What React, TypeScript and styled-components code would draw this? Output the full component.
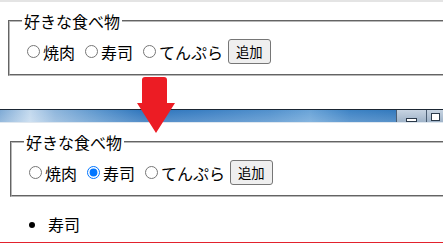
import styled, { createGlobalStyle } from "styled-components";

const GlobalStyle = createGlobalStyle`
  html, body {
    margin: 0;
    padding: 0;
    background: #fff;
  }
  body {
    font-family: "Noto Sans CJK JP", "Noto Sans", sans-serif;
    font-size: 16px;
    color: #000;
  }
`;

const Page = styled.div`
  position: relative;
  width: 443px;
  height: 243px;
  overflow: hidden;
  background: #fff;
`;

const TopEdge = styled.div`
  height: 2px;
  background: #e4e4e4;
`;

const Shot = styled.div<{ $left: number; $height: number }>`
  height: ${(p) => p.$height}px;
  padding: 8px 0 0 ${(p) => p.$left}px;
  box-sizing: border-box;
  overflow: hidden;
`;

const Fieldset = styled.fieldset`
  width: 480px;
  margin: 0;
  padding: 7px 12px 10px 12px;
  border: 2px groove #b8b8b8;
  box-sizing: border-box;
`;

const Legend = styled.legend`
  padding: 0 2px;
  font-size: 16px;
  line-height: 22px;
`;

const Row = styled.div`
  display: flex;
  align-items: center;
  height: 25px;
`;

const Choice = styled.label`
  display: inline-flex;
  align-items: center;
  margin-right: 5px;
  line-height: 22px;
`;

const Radio = styled.input`
  width: 13px;
  height: 13px;
  margin: 0 3px 0 5px;
`;

const AddButton = styled.button`
  height: 25px;
  padding: 0 7px;
  font-family: "Noto Sans CJK JP", sans-serif;
  font-size: 13.33px;
  color: #000;
  background: #efefef;
  border: 1px solid #767676;
  border-radius: 3px;
`;

const TitleBar = styled.div`
  display: flex;
  height: 12px;
  border-top: 1px solid #1b2633;
  border-bottom: 1px solid #dfe7ef;
  background:
    linear-gradient(to bottom, rgba(255, 255, 255, 0) 0%, rgba(255, 255, 255, 0.18) 100%),
    linear-gradient(
      to right,
      #7eaad5 0px,
      #c3d9ee 30px,
      #8fb6dc 55px,
      #5a95cd 100px,
      #2d74bc 145px,
      #3b7fc3 200px,
      #5291cd 270px,
      #6aa4d8 310px,
      #3e83c5 350px,
      #3379bd 398px
    );
`;

const BarSpacer = styled.div`
  flex: 1;
`;

const WinButton = styled.div<{ $width: number }>`
  position: relative;
  width: ${(p) => p.$width}px;
  border-left: 1px solid #4a5d72;
  background: linear-gradient(to bottom, #c7d4e2, #9fb3c8);
  display: flex;
  align-items: flex-end;
  justify-content: center;
`;

const MinGlyph = styled.div`
  width: 9px;
  height: 2px;
  margin-bottom: 0;
  background: #fff;
  border: 1px solid #2b3a4a;
`;

const RestoreGlyph = styled.div`
  width: 7px;
  height: 6px;
  margin: 0 0 1px 0;
  background: #fff;
  border: 1px solid #2b3a4a;
`;

const List = styled.ul`
  margin: 16px 0 0 -2px;
  padding-left: 40px;
  line-height: 23px;
`;

const RedEdge = styled.div`
  height: 2px;
  background: #e2222d;
`;

const Arrow = styled.svg`
  position: absolute;
  left: 136px;
  top: 76px;
`;

const foods = ["焼肉", "寿司", "てんぷら"];

function FoodForm(props: { selected?: string; name: string }) {
  return (
    <Fieldset>
      <Legend>好きな食べ物</Legend>
      <Row>
        {foods.map((f) => (
          <Choice key={f}>
            <Radio
              type="radio"
              name={props.name}
              checked={props.selected === f}
              readOnly
            />
            {f}
          </Choice>
        ))}
        <AddButton>追加</AddButton>
      </Row>
    </Fieldset>
  );
}

export default function App() {
  return (
    <Page>
      <GlobalStyle />
      <TopEdge />
      <Shot $left={8} $height={107}>
        <FoodForm name="before" />
      </Shot>
      <TitleBar>
        <BarSpacer />
        <WinButton $width={29}>
          <MinGlyph />
        </WinButton>
        <WinButton $width={16}>
          <RestoreGlyph />
        </WinButton>
      </TitleBar>
      <Shot $left={10} $height={119}>
        <FoodForm name="after" selected="寿司" />
        <List>
          <li>寿司</li>
        </List>
      </Shot>
      <RedEdge />
      <Arrow width="40" height="58" viewBox="0 0 40 58">
        <path
          d="M6 4 Q6 1 9 1 L28 1 Q31 1 31 4 L31 27 L39 27 L20 57 L1 27 L6 27 Z"
          fill="#ec1c24"
        />
      </Arrow>
    </Page>
  );
}
